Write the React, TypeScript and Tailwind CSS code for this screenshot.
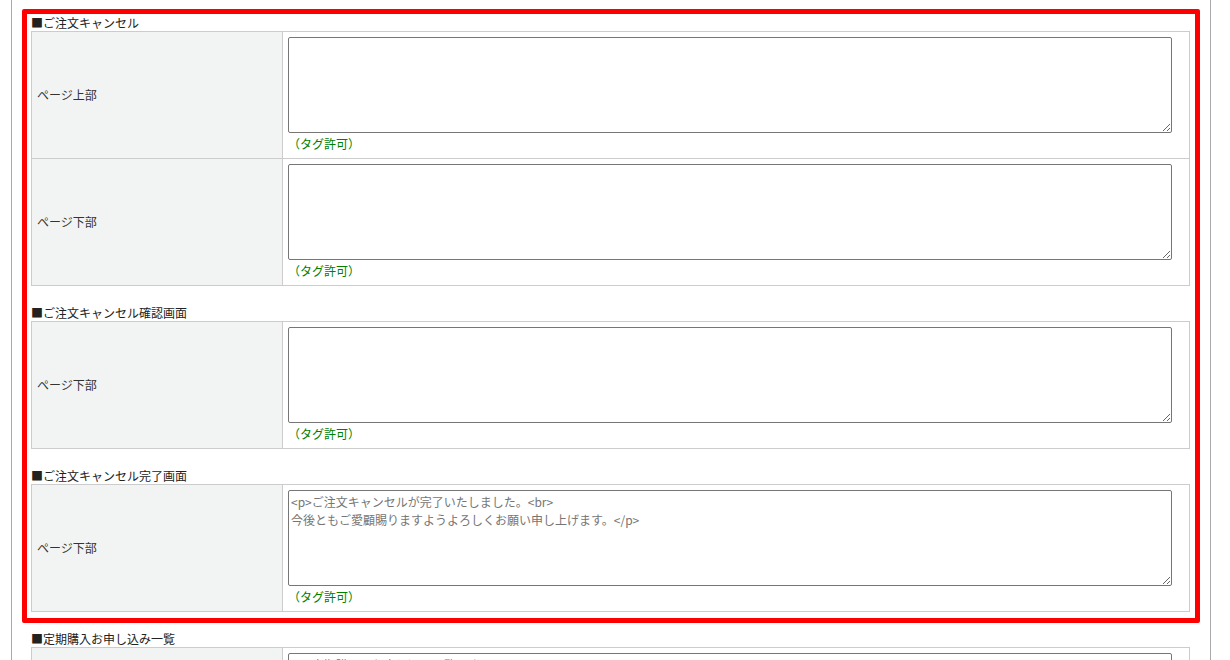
import React from "react";

const font = { fontFamily: '"Noto Sans CJK JP", "Noto Sans", sans-serif' };

function Row({ label, value, first }: { label: string; value?: string; first?: boolean }) {
  return (
    <div className={first ? "flex" : "flex border-t border-[#cccccc]"}>
      <div className="w-[251px] shrink-0 bg-[#f2f3f3] border-r border-[#cccccc] px-[5px] flex items-center text-[12px] text-[#333333]">
        {label}
      </div>
      <div className="flex-1 p-[5px]">
        <textarea
          className="block w-[884px] h-[96px] border border-[#767676] rounded-[2px] bg-white p-[2px] text-[12px] leading-[18px] text-[#757575] outline-none"
          defaultValue={value ?? ""}
          style={font}
        />
        <div className="mt-[2px] text-[12px] leading-[18px] text-[#008000]">（タグ許可）</div>
      </div>
    </div>
  );
}

function Section({
  title,
  rows,
  className,
}: {
  title: string;
  rows: { label: string; value?: string }[];
  className?: string;
}) {
  return (
    <div className={className}>
      <div className="text-[12px] leading-[17px] text-[#222222]">■{title}</div>
      <div className="border border-[#cccccc]">
        {rows.map((r, i) => (
          <Row key={i} label={r.label} value={r.value} first={i === 0} />
        ))}
      </div>
    </div>
  );
}

export default function App() {
  return (
    <div className="w-[1230px] h-[660px] overflow-hidden bg-white" style={font}>
      <div className="ml-[11px] w-[1200px] min-h-[660px] border-l border-r border-[#aaaaaa] pl-[19px] pr-[20px] pt-[9px]">
        <div className="-ml-[9px] -mr-[10px] border-[5px] border-[#ff0000] rounded-[2px] pl-[4px] pr-[5px] pb-[6px]">
          <Section
            title="ご注文キャンセル"
            rows={[{ label: "ページ上部" }, { label: "ページ下部" }]}
          />
          <Section
            className="mt-[18px]"
            title="ご注文キャンセル確認画面"
            rows={[{ label: "ページ下部" }]}
          />
          <Section
            className="mt-[18px]"
            title="ご注文キャンセル完了画面"
            rows={[
              {
                label: "ページ下部",
                value:
                  "<p>ご注文キャンセルが完了いたしました。<br>\n今後ともご愛顧賜りますようよろしくお願い申し上げます。</p>",
              },
            ]}
          />
        </div>
        <Section
          className="mt-[7px]"
          title="定期購入お申し込み一覧"
          rows={[
            {
              label: "ページ上部",
              value: "<p>定期購入のお申し込み一覧です。</p>",
            },
          ]}
        />
      </div>
    </div>
  );
}
